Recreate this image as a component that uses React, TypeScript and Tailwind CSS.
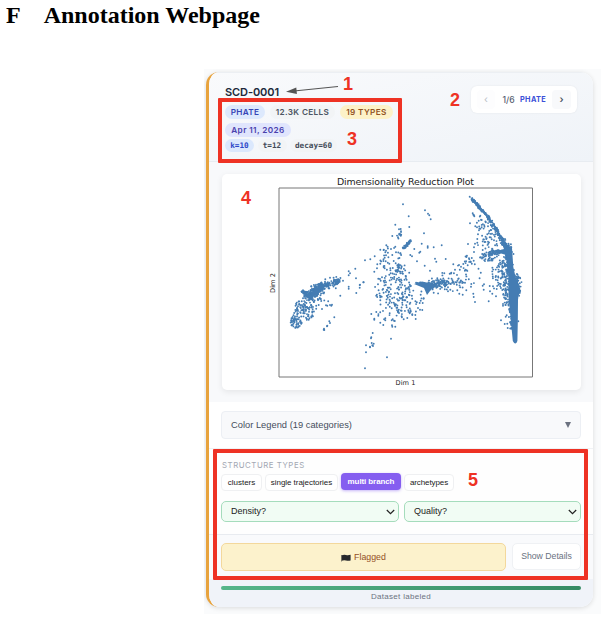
import React from "react";

const DOT = "#3a76af";

type Pt = [number, number];

function rng(seed: number) {
  let s = seed;
  return () => {
    s = (s * 1664525 + 1013904223) % 4294967296;
    return s / 4294967296;
  };
}
const rand = rng(42);
const gauss = () => (rand() + rand() + rand() + rand() - 2) * 1.7;

// Scatter n points around the segment a-b with a normal spread.
function along(a: Pt, b: Pt, n: number, sx: number, sy: number): Pt[] {
  return Array.from({ length: n }, () => {
    const t = rand();
    return [a[0] + (b[0] - a[0]) * t + gauss() * sx, a[1] + (b[1] - a[1]) * t + gauss() * sy] as Pt;
  });
}

// Scatter n points evenly inside the ellipse centred on (cx, cy).
function cloud(cx: number, cy: number, rx: number, ry: number, n: number): Pt[] {
  return Array.from({ length: n }, () => {
    const r = Math.sqrt(rand());
    const a = rand() * Math.PI * 2;
    return [cx + Math.cos(a) * r * rx, cy + Math.sin(a) * r * ry] as Pt;
  });
}

// Measured outliers, stored in thirds of a plot unit from an origin.
function thirds(ox: number, oy: number, flat: number[]): Pt[] {
  const out: Pt[] = [];
  for (let i = 0; i < flat.length; i += 2) out.push([ox + flat[i] / 3, oy + flat[i + 1] / 3]);
  return out;
}

const points: Pt[] = [
  ...thirds(200, 165, [586, 179, 577, 213, 559, 241, 541, 254, 558, 257, 573, 252, 524, 274, 511, 283, 495, 286, 558, 271, 557, 289, 541, 296, 532, 298, 551, 304, 531, 310, 523, 320, 554, 310, 466, 311, 446, 319, 450, 325, 446, 331, 468, 340, 491, 352, 429, 347, 568, 296, 571, 310, 581, 288, 588, 262, 577, 270, 586, 245, 597, 193, 598, 206, 594, 217, 546, 337, 535, 341, 551, 348, 568, 329, 572, 325, 583, 336, 534, 358, 558, 352, 480, 359]),
  ...thirds(400, 165, [9, 118, 26, 154, 75, 136, 84, 146, 88, 151, 92, 163, 28, 186, 72, 205, 2, 192, 3, 201, 43, 252, 65, 236, 61, 260, 58, 263, 83, 244, 83, 248, 101, 247, 125, 241, 31, 270, 36, 274, 51, 289, 74, 302, 105, 281, 109, 290, 137, 282, 90, 317, 160, 298, 177, 300, 165, 314, 190, 297, 204, 237, 210, 175, 222, 247, 225, 236, 232, 222, 234, 208, 209, 95, 232, 233, 262, 208, 259, 222, 253, 181, 243, 164, 236, 167, 265, 236, 222, 261, 248, 255, 245, 187, 231, 187, 264, 184, 272, 195, 288, 196, 269, 217, 276, 206, 282, 226, 237, 196, 218, 145, 220, 149, 223, 154, 222, 151, 226, 184, 241, 152, 245, 165]),
  ...thirds(200, 280, [446, 20, 446, 26, 469, 39, 479, 15, 479, 23, 490, 7, 421, 47, 378, 76, 382, 77, 390, 75, 396, 74, 394, 77, 403, 112, 388, 124, 390, 129, 382, 137, 381, 139, 372, 146, 373, 150, 371, 149, 366, 87, 518, 159, 514, 172, 513, 175, 498, 196, 515, 189, 521, 191, 517, 196, 519, 198, 510, 200, 510, 202, 498, 217, 495, 265, 561, 232, 573, 176, 514, 102, 529, 96, 535, 107, 523, 116, 523, 119, 541, 128, 556, 115, 556, 121, 550, 135, 576, 136, 577, 140, 586, 140, 578, 118, 582, 122, 569, 100, 597, 99]),
  ...thirds(400, 280, [67, 90, 60, 89, 68, 69, 54, 84, 46, 105, 47, 117, 37, 105, 30, 97, 29, 100, 22, 114, 11, 118, 25, 91, 59, 69, 31, 68, 172, 31, 178, 41, 188, 44, 199, 31, 220, 41, 221, 51, 225, 66, 266, 64, 277, 41, 288, 49, 270, 34, 303, 121, 314, 132, 322, 131, 323, 144, 317, 110, 320, 106, 309, 77, 309, 72, 355, 124, 248, 17, 252, 13, 269, 18, 251, 29, 214, 12, 279, 19, 290, 27, 144, 34, 151, 29, 187, 5, 195, 8]),
  // left cluster
  ...along([307, 297], [322, 286], 230, 2.6, 2.4),
  ...along([322, 286], [337, 282], 60, 2.2, 2.4),
  ...along([302, 291], [308, 295], 30, 0.8, 0.8),
  ...cloud(296, 321, 6, 7, 50),
  ...along([296, 311], [303, 303], 38, 2.6, 4),
  ...cloud(308, 311, 6, 9, 50),
  ...along([312, 306], [322, 296], 22, 3.5, 3),
  ...along([336, 282], [339, 280], 25, 1.3, 1.5),
  // central cloud
  ...along([394, 262], [396, 290], 35, 7, 7),
  ...cloud(393, 290, 19, 16, 80),
  ...cloud(408, 300, 16, 16, 48),
  ...cloud(394, 309, 18, 14, 28),
  ...cloud(390, 256, 12, 10, 18),
  ...cloud(399, 271, 4, 7, 24),
  ...along([404, 248], [411, 240], 45, 0.6, 0.6),
  ...cloud(399, 234, 3, 8, 7),
  ...along([417, 283], [438, 285], 45, 2, 1),
  ...along([432, 287], [445, 281], 75, 3, 3),
  ...along([443, 283], [466, 277], 40, 5, 5),
  ...cloud(463, 273, 18, 16, 22),
  ...cloud(469, 260, 5, 6, 14),
  ...cloud(487, 257, 8, 5, 34),
  ...along([489, 253], [502, 251], 60, 2, 1.2),
  // upper right arc and its inner scatter
  ...along([471, 198], [479, 207], 35, 0.6, 0.8),
  ...along([478, 206], [490, 219], 40, 0.6, 0.7),
  ...along([489, 219], [502, 240], 75, 0.8, 1.1),
  ...along([479, 216], [495, 241], 28, 4, 4),
  ...along([480, 245], [495, 239], 16, 4, 4),
  ...cloud(499, 273, 9, 19, 60),
  ...along([504, 262], [506, 300], 60, 1.8, 3),
  // right-hand body
  ...along([503, 241], [510, 252], 90, 1.6, 2),
  ...along([508, 253], [512, 290], 210, 1.6, 2),
  ...along([515, 277], [517, 295], 150, 2.2, 2.5),
  ...along([508, 298], [513, 330], 50, 1.4, 2.5),
];

function Plot() {
  return (
    <svg viewBox="222 174 359 216" className="block h-[216px] w-[359px]">
      <text x="405.5" y="185" textAnchor="middle" textLength="137" fontSize="9.4" fill="#222" fontFamily="DejaVu Sans, sans-serif">Dimensionality Reduction Plot</text>
      <g fill={DOT} opacity="0.95">
        {points.map(([x, y], i) => (
          <circle key={i} cx={x.toFixed(1)} cy={y.toFixed(1)} r="0.95" />
        ))}
        <path d="M469.5 196.5 L480 206.5 L493 222 L503.5 240 L507 247.5 L512 248 L513.3 267 L516 279 L519.5 287 L518 300 L517.8 322 L517.4 341 Q515.5 346 512.8 341 L510.5 317 L508.5 297 L508.5 270 L506 255 L495 251.5 L504 249 L501 239 L491.5 222 L478 208 Z" />
        <path d="M414 284 L422 281.5 L438 285 L431.5 289 L427 295 L424 288 Z" />
        <path d="M309 297 L316 288 L322 284.5 L324 288 L319 293 L311 298 Z" />
      </g>
      <path d="M279 188 V377 H532.5 V188 Z" fill="none" stroke="#777" strokeWidth="1" />
      <text x="405.5" y="385" textAnchor="middle" textLength="20" fontSize="6.6" fill="#222" fontFamily="DejaVu Sans, sans-serif">Dim 1</text>
      <text transform="translate(275 283) rotate(-90)" textAnchor="middle" textLength="20" fontSize="6.6" fill="#222" fontFamily="DejaVu Sans, sans-serif">Dim 2</text>
    </svg>
  );
}

function Pill({ className, children }: { className: string; children: React.ReactNode }) {
  return (
    <span className={`flex shrink-0 items-center justify-center rounded-full whitespace-nowrap ${className}`}>
      {children}
    </span>
  );
}

function Select({ label, className }: { label: string; className: string }) {
  return (
    <div className={`flex h-[21px] items-center justify-between rounded-[5px] border border-[#a5dcbc] bg-[#f1fcf4] pr-[3px] pl-[9px] text-[9px] text-[#222] ${className}`}>
      <span>{label}</span>
      <svg viewBox="0 0 9 6" className="h-[6px] w-[9px]">
        <path d="M0.8 1 L4.5 4.7 L8.2 1" fill="none" stroke="#222" strokeWidth="1.2" />
      </svg>
    </div>
  );
}

function Annotations() {
  return (
    <div className="pointer-events-none absolute inset-0 text-[18px] leading-[18px] font-bold text-[#ee3224]">
      <div className="absolute top-[98px] left-[218px] h-[65px] w-[184px] rounded-[1px] border-4 border-[#ee3224]" />
      <div className="absolute top-[449px] left-[213px] h-[131px] w-[375px] rounded-[1px] border-4 border-[#ee3224]" />
      <span className="absolute top-[75px] left-[343px]">1</span>
      <span className="absolute top-[91px] left-[450px]">2</span>
      <span className="absolute top-[130px] left-[347px]">3</span>
      <span className="absolute top-[189px] left-[241px]">4</span>
      <span className="absolute top-[471px] left-[468px]">5</span>
      <svg viewBox="0 0 60 14" className="absolute top-[82px] left-[282px] h-[14px] w-[60px]">
        <path d="M56 4.5 L12 9" stroke="#555" strokeWidth="1.2" />
        <path d="M4 9.8 L14.3 5.6 L14.9 12.1 Z" fill="#555" />
      </svg>
    </div>
  );
}

export default function App() {
  return (
    <div className="relative h-[619px] w-[601px] overflow-hidden bg-white font-['Liberation_Sans',sans-serif]">
      <h1 className="flex h-[69px] gap-[23px] pt-[2px] pl-[6px] font-['Liberation_Serif',serif] text-[24px] leading-[26px] font-bold text-black">
        <span>F</span>
        <span>Annotation Webpage</span>
      </h1>
      <div className="ml-[204px] h-[545px] w-[397px] overflow-hidden bg-[#fafbfc] pt-[3px] pl-[2px]">
        <div className="flex h-[535px] w-[387px] flex-col overflow-hidden rounded-[13px] border-l-[3px] border-[#e8a33d] bg-white shadow-[0_1px_5px_rgba(0,0,0,0.13)]">
          <header className="flex h-[90px] shrink-0 justify-between border-t border-b border-t-[#eceff3] border-b-[#e8ecf1] bg-linear-to-br from-[#f9fafc] to-[#eff3f8] pt-[11px] pr-[16px] pl-[16px]">
            <div className="flex flex-col">
              <h2 className="h-[21px] font-[Inter,sans-serif] text-[11px] leading-[16px] font-semibold tracking-[-0.1px] text-[#20293a]">SCD-0001</h2>
              <div className="flex gap-[5px] font-[Inter,sans-serif] text-[8.2px] font-semibold tracking-[0.35px]">
                <Pill className="h-[14px] w-[40px] bg-[#dde9fd] text-[#3544b5]">PHATE</Pill>
                <Pill className="h-[14px] w-[65px] bg-[#f2f4f6] text-[#4b5563]">12.3K CELLS</Pill>
                <Pill className="h-[14px] w-[53px] bg-[#fdf2c8] text-[#92531f]">19 TYPES</Pill>
              </div>
              <div className="mt-[4px] flex font-[Inter,sans-serif] text-[8.2px] font-semibold tracking-[0.4px]">
                <Pill className="h-[14px] w-[66px] bg-[#e0e5fd] text-[#4a41ad]">Apr 11, 2026</Pill>
              </div>
              <div className="mt-[2px] flex gap-[3.5px] font-['DejaVu_Sans_Mono',monospace] text-[7.7px] font-bold">
                <Pill className="h-[13px] w-[29px] bg-[#dbe8fd] text-[#2d49c8]">k=10</Pill>
                <Pill className="h-[13px] w-[29px] bg-[#f2f4f6] text-[#434b58]">t=12</Pill>
                <Pill className="h-[13px] w-[47px] bg-[#f2f4f6] text-[#434b58]">decay=60</Pill>
              </div>
            </div>
            <nav className="mt-[2px] flex h-[27px] w-[106px] items-center rounded-[6px] bg-white pl-[6px] font-[Inter,sans-serif] shadow-[0_0_2px_rgba(0,0,0,0.08)]">
              <span className="flex h-[19px] w-[18px] items-center justify-center rounded-[4px] bg-[#fdfdfe] text-[10px] text-[#b9bec6]">‹</span>
              <span className="ml-[7.5px] w-[17.5px] pt-px text-[8.6px] font-medium text-[#596171]">1/6</span>
              <span className="w-[32px] pt-px text-[7.3px] font-bold tracking-[0.35px] text-[#3b50d8]">PHATE</span>
              <span className="flex h-[19px] w-[19px] items-center justify-center rounded-[4px] bg-[#f8f9fb] text-[10px] font-semibold text-[#4b5563]">›</span>
            </nav>
          </header>

          <section className="h-[240px] shrink-0 bg-[#f8f9fb] pt-[12px] pl-[13px]">
            <div className="h-[216px] w-[359px] rounded-[5px] bg-white shadow-[0_2px_6px_rgba(0,0,0,0.08)]">
              <Plot />
            </div>
          </section>

          <section className="h-[47px] shrink-0 border-b border-[#f0f2f5] pt-[9px] pl-[12px]">
            <div className="flex h-[28px] w-[360px] items-center justify-between rounded-[4px] border border-[#eceff4] bg-[#f8f9fb] pr-[9px] pl-[9px] text-[9.3px] tracking-[0.02px] text-[#454d5b]">
              <span className="pt-px">Color Legend (19 categories)</span>
              <svg viewBox="0 0 6 6" className="h-[6px] w-[6px]"><path d="M0 0 H6 L3 6 Z" fill="#6b7280" /></svg>
            </div>
          </section>

          <section className="flex h-[86px] shrink-0 flex-col border-b border-[#e8ebf0] bg-[#fefefe] pt-[11px] pl-[12px]">
            <div className="h-[14px] pl-px font-[Inter,sans-serif] text-[7.8px] leading-[11px] tracking-[0.55px] text-[#a3a8b3]">STRUCTURE TYPES</div>
            <div className="flex h-[17px] gap-[3px] text-[8px] text-[#222]">
              <span className="flex w-[41px] items-center justify-center rounded-[4px] border border-[#eff0f2] bg-white">clusters</span>
              <span className="flex w-[73px] items-center justify-center rounded-[4px] border border-[#eff0f2] bg-white tracking-[-0.05px] whitespace-nowrap">single trajectories</span>
              <span className="-mt-px mb-px flex w-[60px] items-center justify-center rounded-[4px] bg-[#855ef0] font-bold tracking-[-0.1px] whitespace-nowrap text-white shadow-[0_1px_3px_rgba(133,94,240,0.45)]">multi branch</span>
              <span className="flex w-[50px] items-center justify-center rounded-[4px] border border-[#eff0f2] bg-white tracking-[-0.1px]">archetypes</span>
            </div>
            <div className="mt-[10px] flex gap-[5px]">
              <Select label="Density?" className="w-[178px]" />
              <Select label="Quality?" className="w-[177px]" />
            </div>
          </section>

          <section className="flex h-[44px] shrink-0 gap-[6px] bg-[#f9fafc] pt-[8px] pl-[12px]">
            <div className="flex h-[28px] w-[285px] items-center justify-center gap-[3px] rounded-[5px] border border-[#f3d89c] bg-[#fcf2cc] pt-px text-[8.8px] text-[#925026]">
              <svg viewBox="0 0 10 8" className="h-[8px] w-[10px]">
                <path d="M0.4 1 V7.5" stroke="#444" strokeWidth="0.7" />
                <path d="M0.8 1.2 Q3 0.4 5 1 T9.6 0.8 V6.4 Q7.3 7.1 5 6.5 T0.8 6.7 Z" fill="#26282c" />
              </svg>
              <span>Flagged</span>
            </div>
            <div className="flex h-[27px] w-[69px] items-center justify-center rounded-[5px] border border-[#eff1f4] bg-white pt-px text-[8.7px] text-[#697180]">Show Details</div>
          </section>

          <footer className="flex h-[28px] shrink-0 flex-col bg-[#f0f3f9] pt-[7px] pl-[12px]">
            <div className="h-[4px] w-[360px] rounded-full bg-linear-to-r from-[#55b58a] to-[#368b64]" />
            <div className="w-[360px] pt-[2px] text-center text-[8px] leading-[10px] tracking-[0.3px] text-[#6b7280]">Dataset labeled</div>
          </footer>
        </div>
      </div>
      <Annotations />
    </div>
  );
}
